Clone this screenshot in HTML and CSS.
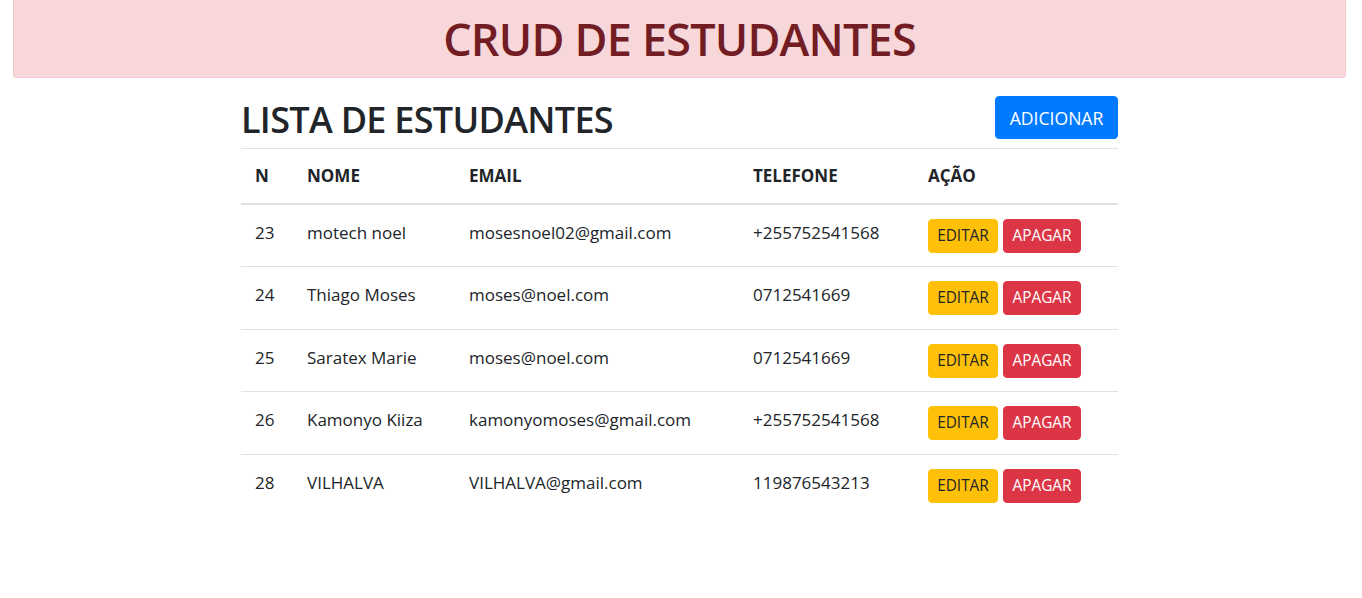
FILE: index.html
```html
<!DOCTYPE html>
<html lang="pt">
<head>
<meta charset="utf-8">
<title>CRUD de Estudantes</title>
<link rel="stylesheet" href="styles.css">
</head>
<body>
<header class="alert">
  <h1 class="alert-title">CRUD DE ESTUDANTES</h1>
</header>
<main class="content">
  <div class="toolbar">
    <h2 class="page-title">LISTA DE ESTUDANTES</h2>
    <a class="btn btn-primary" href="#">ADICIONAR</a>
  </div>
  <table class="table">
    <thead>
      <tr>
        <th class="c-n">N</th>
        <th class="c-nome">NOME</th>
        <th class="c-email">EMAIL</th>
        <th class="c-tel">TELEFONE</th>
        <th class="c-acao">AÇÃO</th>
      </tr>
    </thead>
    <tbody>
      <tr>
        <td>23</td><td>motech noel</td><td>mosesnoel02@gmail.com</td><td>+255752541568</td>
        <td><div class="actions"><a class="btn btn-sm btn-warning" href="#">EDITAR</a><a class="btn btn-sm btn-danger" href="#">APAGAR</a></div></td>
      </tr>
      <tr>
        <td>24</td><td>Thiago Moses</td><td>moses@noel.com</td><td>0712541669</td>
        <td><div class="actions"><a class="btn btn-sm btn-warning" href="#">EDITAR</a><a class="btn btn-sm btn-danger" href="#">APAGAR</a></div></td>
      </tr>
      <tr>
        <td>25</td><td>Saratex Marie</td><td>moses@noel.com</td><td>0712541669</td>
        <td><div class="actions"><a class="btn btn-sm btn-warning" href="#">EDITAR</a><a class="btn btn-sm btn-danger" href="#">APAGAR</a></div></td>
      </tr>
      <tr>
        <td>26</td><td>Kamonyo Kiiza</td><td>kamonyomoses@gmail.com</td><td>+255752541568</td>
        <td><div class="actions"><a class="btn btn-sm btn-warning" href="#">EDITAR</a><a class="btn btn-sm btn-danger" href="#">APAGAR</a></div></td>
      </tr>
      <tr class="last">
        <td>28</td><td>VILHALVA</td><td>VILHALVA@gmail.com</td><td>119876543213</td>
        <td><div class="actions"><a class="btn btn-sm btn-warning" href="#">EDITAR</a><a class="btn btn-sm btn-danger" href="#">APAGAR</a></div></td>
      </tr>
    </tbody>
  </table>
</main>
</body>
</html>
```
FILE: styles.css
```css
* { box-sizing: border-box; }
html, body { margin: 0; padding: 0; background: #fff; }
body {
  font-family: "Open Sans", "Noto Sans", "Liberation Sans", sans-serif;
  font-size: 17px;
  line-height: 24px;
  color: #212529;
}
.alert {
  margin: 0 16px 0 13px;
  height: 78px;
  background: #f8d7da;
  border: 1px solid #f5c6cb;
  border-top: 0;
  border-radius: 0 0 4px 4px;
  display: flex;
  align-items: center;
  justify-content: center;
}
.alert-title {
  margin: 0;
  font-size: 45px;
  font-weight: 600;
  letter-spacing: -0.8px;
  line-height: 52px;
  color: #721c24;
  padding-top: 1px;
}
.content {
  width: 877px;
  margin: 18px 0 0 241px;
}
.toolbar {
  display: flex;
  justify-content: space-between;
  align-items: flex-start;
  height: 52px;
}
.page-title {
  margin: 0;
  font-size: 36px;
  font-weight: 600;
  letter-spacing: -0.7px;
  line-height: 48px;
  padding-top: 0;
}
.btn {
  display: inline-flex;
  align-items: center;
  justify-content: center;
  text-decoration: none;
  border-radius: 4px;
  border: 1px solid transparent;
  white-space: nowrap;
}
.btn-primary {
  width: 123px;
  height: 43px;
  font-size: 17.6px;
  background: #007bff;
  border-color: #007bff;
  color: #fff;
}
.table {
  width: 877px;
  border-collapse: collapse;
  table-layout: fixed;
}
.table th, .table td {
  text-align: left;
  padding: 0 12px;
}
.table thead th {
  height: 55px;
  font-weight: 700;
  border-top: 1px solid #dee2e6;
  border-bottom: 2px solid #dee2e6;
  vertical-align: middle;
}
.c-n { width: 54px; }
.c-nome { width: 162px; }
.c-email { width: 284px; }
.c-tel { width: 175px; }
.c-acao { width: 202px; }
.table tbody td {
  vertical-align: top;
  padding-top: 16px;
  padding-bottom: 13.67px;
  border-bottom: 1px solid #dee2e6;
}
.table tbody td:first-child, .table thead th:first-child { padding-left: 14px; }
.table tbody tr.last td { border-bottom: 0; }
.actions {
  display: flex;
  gap: 5px;
  margin-top: -2px;
}
.btn-sm {
  height: 34px;
  padding: 0 8px;
  font-size: 15.4px;
}
.btn-warning {
  width: 70px;
  background: #ffc107;
  border-color: #ffc107;
  color: #212529;
}
.btn-danger {
  width: 78px;
  background: #dc3545;
  border-color: #dc3545;
  color: #fff;
}
```
